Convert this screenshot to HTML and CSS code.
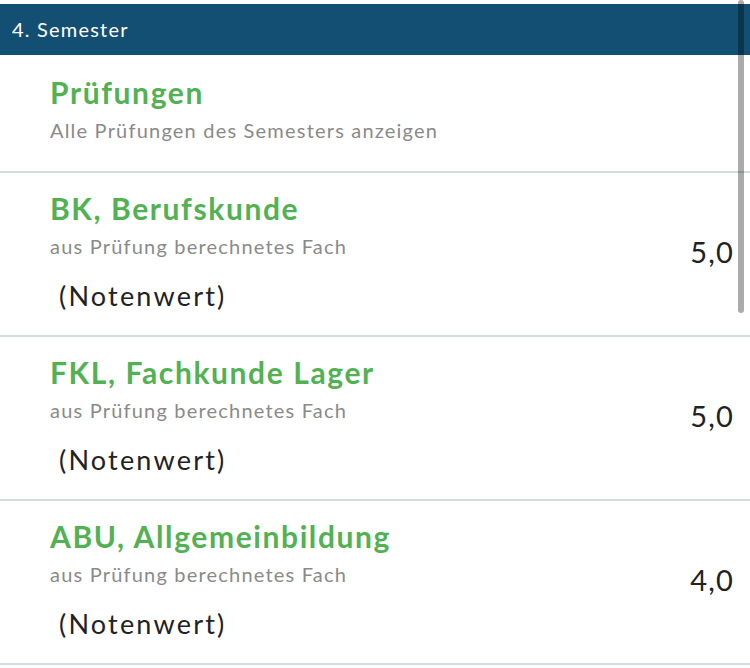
FILE: index.html
```html
<!DOCTYPE html>
<html lang="de">
<head>
<meta charset="utf-8">
<title>4. Semester</title>
<link rel="stylesheet" href="styles.css">
</head>
<body>
<div class="screen">
  <div class="header">4. Semester</div>
  <div class="list">
    <div class="row row-first">
      <div class="info">
        <div class="title">Prüfungen</div>
        <div class="sub">Alle Prüfungen des Semesters anzeigen</div>
      </div>
    </div>
    <div class="row">
      <div class="info">
        <div class="title">BK, Berufskunde</div>
        <div class="sub">aus Prüfung berechnetes Fach</div>
        <div class="note">(Notenwert)</div>
      </div>
      <div class="value">5,0</div>
    </div>
    <div class="row">
      <div class="info">
        <div class="title">FKL, Fachkunde Lager</div>
        <div class="sub">aus Prüfung berechnetes Fach</div>
        <div class="note">(Notenwert)</div>
      </div>
      <div class="value">5,0</div>
    </div>
    <div class="row">
      <div class="info">
        <div class="title">ABU, Allgemeinbildung</div>
        <div class="sub">aus Prüfung berechnetes Fach</div>
        <div class="note">(Notenwert)</div>
      </div>
      <div class="value">4,0</div>
    </div>
  </div>
  <div class="scrollbar"></div>
</div>
</body>
</html>
```
FILE: styles.css
```css
html, body {
  margin: 0;
  padding: 0;
  background: #ffffff;
}
body {
  font-family: Lato, "Open Sans", sans-serif;
  width: 750px;
  height: 668px;
  overflow: hidden;
}
.screen {
  position: relative;
  padding-top: 4px;
}
.header {
  height: 51px;
  line-height: 51px;
  background: #134f73;
  color: #ffffff;
  font-size: 20px;
  letter-spacing: 1.2px;
  padding-left: 12px;
}
.list {
  display: flex;
  flex-direction: column;
}
.row {
  display: flex;
  align-items: center;
  justify-content: space-between;
  padding: 18px 17px 22px 50px;
  border-bottom: 2px solid #d3dbdf;
}
.row-first {
  padding-top: 20px;
  padding-bottom: 29px;
}
.info {
  display: flex;
  flex-direction: column;
}
.title {
  color: #52b152;
  font-weight: 700;
  font-size: 30px;
  line-height: 34px;
  letter-spacing: 1.6px;
}
.sub {
  color: #8a8a8a;
  font-size: 20px;
  line-height: 24px;
  letter-spacing: 1.2px;
  margin-top: 9px;
}
.note {
  color: #222222;
  font-size: 27px;
  line-height: 34px;
  letter-spacing: 2.2px;
  margin-top: 21px;
  padding-left: 9px;
}
.value {
  color: #222222;
  font-size: 29px;
  line-height: 34px;
  letter-spacing: 1.2px;
  margin-right: -1px;
}
.scrollbar {
  position: absolute;
  top: 0;
  left: 738px;
  width: 6px;
  height: 313px;
  border-radius: 3px;
  background: rgba(0, 0, 0, 0.33);
}
```
